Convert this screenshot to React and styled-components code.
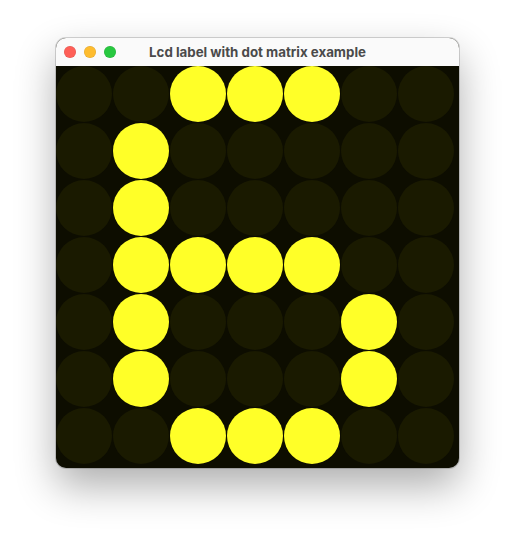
import React from 'react'
import styled, { createGlobalStyle } from 'styled-components'

const Global = createGlobalStyle`
  html, body { margin: 0; padding: 0; background: #ffffff; }
  body { font-family: Inter, "Liberation Sans", Arial, sans-serif; }
`

const Page = styled.div`
  display: flex;
  justify-content: center;
  padding-top: 38px;
  width: 515px;
  height: 543px;
  box-sizing: border-box;
`

const Window = styled.div`
  width: 403px;
  height: 430px;
  border-radius: 10px;
  overflow: hidden;
  background: #0d0d00;
  box-shadow: 0 0 0 1px rgba(0, 0, 0, 0.16), 0 18px 40px rgba(0, 0, 0, 0.32);
  display: flex;
  flex-direction: column;
`

const TitleBar = styled.div`
  height: 28px;
  flex: none;
  background: #fafafa;
  display: flex;
  align-items: center;
  position: relative;
`

const Lights = styled.div`
  display: flex;
  gap: 8px;
  padding-left: 8px;
`

const Light = styled.span`
  width: 12px;
  height: 12px;
  border-radius: 50%;
  background: ${p => p.color};
  box-shadow: inset 0 0 0 0.5px rgba(0, 0, 0, 0.12);
`

const Title = styled.div`
  position: absolute;
  left: 0;
  right: 0;
  text-align: center;
  font-size: 13.3px;
  font-weight: 700;
  color: #4a4a4a;
  pointer-events: none;
`

const Matrix = styled.div`
  display: grid;
  grid-template-columns: repeat(7, 56px);
  grid-auto-rows: 56px;
  gap: 1px;
  padding-bottom: 2px;
`

const Dot = styled.div`
  width: 56px;
  height: 56px;
  border-radius: 50%;
  background: ${p => (p.on ? '#ffff28' : '#1a1a00')};
`

const glyph = [
  '..###..',
  '.#.....',
  '.#.....',
  '.####..',
  '.#...#.',
  '.#...#.',
  '..###..',
]

export default function App() {
  return (
    <>
      <Global />
      <Page>
        <Window>
          <TitleBar>
            <Lights>
              <Light color="#fe5f57" />
              <Light color="#febc2e" />
              <Light color="#28c840" />
            </Lights>
            <Title>Lcd label with dot matrix example</Title>
          </TitleBar>
          <Matrix>
            {glyph.map((row, r) =>
              row.split('').map((c, i) => <Dot key={r + '-' + i} on={c === '#'} />)
            )}
          </Matrix>
        </Window>
      </Page>
    </>
  )
}
